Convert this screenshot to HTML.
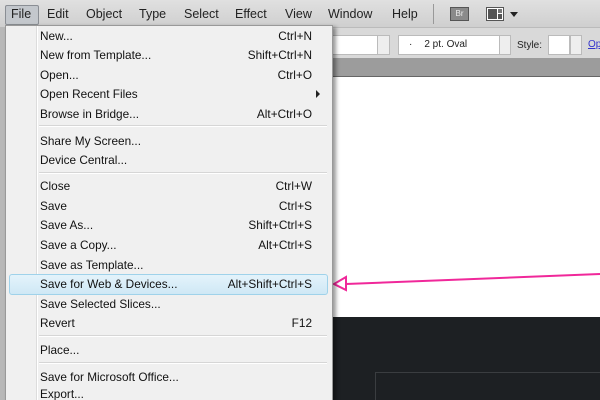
<!DOCTYPE html>
<html style="overflow:hidden"><head><style>
body{margin:0;width:600px;height:400px;overflow:hidden;position:relative;background:#d8d8d8;font-family:"Liberation Sans",sans-serif;}
.a{position:absolute}
.mb{left:0;top:0;width:600px;height:27px;background:linear-gradient(#e0e0e0,#cfcfcf);}
.mi{position:absolute;top:7px;font-size:12.5px;color:#222}
.tb{left:0;top:27px;width:600px;height:31px;background:#d9d9d9;border-top:1px solid #bbb}
.dk{left:0;top:58px;width:600px;height:18px;background:#9c9c9c;border-bottom:1px solid #666}
.doc{left:330px;top:77px;width:270px;height:240px;background:#fff}
.bot{left:330px;top:317px;width:270px;height:83px;background:#1d2023;overflow:hidden}
.menu{left:5px;top:25px;width:326px;height:374px;background:#f0f0f0;border:1px solid #999;border-bottom:none;box-shadow:3px 2px 4px rgba(0,0,0,.4);overflow:hidden}
.col{left:30px;top:0;width:1px;height:375px;background:#dcdcdc;border-right:1px solid #fff}
.r{position:absolute;left:34px;font-size:11.8px;color:#111;height:16px;line-height:16px}
.k{position:absolute;right:20px;font-size:11.8px;color:#111;line-height:16px}
.sep{position:absolute;left:33px;width:288px;height:1px;background:#d6d6d6;border-bottom:1px solid #fff}
</style></head><body>
<div class="a mb">
<div class="a" style="left:5px;top:5px;width:32px;height:18px;background:#c3c7cc;border:1px solid #8a8e94;border-radius:2px"></div>
<span class="mi" style="left:11px">File</span>
<span class="mi" style="left:47px">Edit</span>
<span class="mi" style="left:86px">Object</span>
<span class="mi" style="left:139px">Type</span>
<span class="mi" style="left:184px">Select</span>
<span class="mi" style="left:235px">Effect</span>
<span class="mi" style="left:285px">View</span>
<span class="mi" style="left:328px">Window</span>
<span class="mi" style="left:392px">Help</span>
<div class="a" style="left:433px;top:4px;width:1px;height:20px;background:#999"></div>
<div class="a" style="left:450px;top:7px;width:17px;height:12px;background:#8a8a8a;border:1px solid #555;color:#eee;font-size:8px;text-align:center;line-height:12px">Br</div>
<div class="a" style="left:486px;top:7px;width:16px;height:12px;background:#fff;border:1px solid #555"><div class="a" style="left:1px;top:1px;width:9px;height:10px;background:#555"></div><div class="a" style="left:11px;top:1px;width:4px;height:4px;background:#777"></div><div class="a" style="left:11px;top:6px;width:4px;height:5px;background:#555"></div></div>
<div class="a" style="left:510px;top:12px;border:4px solid transparent;border-top:5px solid #222"></div>
</div>
<div class="a tb">
<div class="a" style="left:330px;top:7px;width:46px;height:18px;background:#fff;border:1px solid #bbb"></div>
<div class="a" style="left:377px;top:7px;width:11px;height:18px;background:#eee;border:1px solid #bbb"></div>
<div class="a" style="left:398px;top:7px;width:100px;height:18px;background:#fff;border:1px solid #bbb;font-size:10px;line-height:18px;color:#222"><span style="margin-left:10px">·</span><span style="margin-left:12px">2 pt. Oval</span></div>
<div class="a" style="left:499px;top:7px;width:10px;height:18px;background:#eee;border:1px solid #bbb"></div>
<span class="a" style="left:517px;top:12px;font-size:10px;color:#222">Style:</span>
<div class="a" style="left:548px;top:7px;width:20px;height:18px;background:#fff;border:1px solid #bbb"></div>
<div class="a" style="left:570px;top:7px;width:10px;height:18px;background:#eee;border:1px solid #bbb"></div>
<span class="a" style="left:588px;top:11px;font-size:10px;color:#33c;text-decoration:underline">Op</span>
</div>
<div class="a dk"></div>
<div class="a doc"></div>
<div class="a bot"><div class="a" style="left:45px;top:55px;width:230px;height:40px;border:1px solid #3a3d40"></div></div>
<div class="a" style="left:0;top:27px;width:5px;height:373px;background:#b8b8b8"></div>
<svg class="a" style="left:330px;top:266px" width="270" height="26"><line x1="16" y1="18" x2="270" y2="8" stroke="#f0289a" stroke-width="2"/><path d="M16 11 L4 18 L16 24 Z" fill="none" stroke="#f0289a" stroke-width="2"/></svg>
<div class="a menu">
<div class="a col"></div>
<div class="a" style="left:3px;top:248px;width:317px;height:19px;background:linear-gradient(#e4f3fb,#cfe8f5);border:1px solid #9fd2ea;border-radius:3px"></div>
<div class="r" style="top:2px">New...</div><div class="k" style="top:2px">Ctrl+N</div>
<div class="r" style="top:21px">New from Template...</div><div class="k" style="top:21px">Shift+Ctrl+N</div>
<div class="r" style="top:41px">Open...</div><div class="k" style="top:41px">Ctrl+O</div>
<div class="r" style="top:60px">Open Recent Files</div><div class="a" style="left:310px;top:64px;border:4px solid transparent;border-left:4px solid #222"></div>
<div class="r" style="top:80px">Browse in Bridge...</div><div class="k" style="top:80px">Alt+Ctrl+O</div>
<div class="sep" style="top:99px"></div>
<div class="r" style="top:107px">Share My Screen...</div>
<div class="r" style="top:126px">Device Central...</div>
<div class="sep" style="top:146px"></div>
<div class="r" style="top:152px">Close</div><div class="k" style="top:152px">Ctrl+W</div>
<div class="r" style="top:172px">Save</div><div class="k" style="top:172px">Ctrl+S</div>
<div class="r" style="top:191px">Save As...</div><div class="k" style="top:191px">Shift+Ctrl+S</div>
<div class="r" style="top:211px">Save a Copy...</div><div class="k" style="top:211px">Alt+Ctrl+S</div>
<div class="r" style="top:231px">Save as Template...</div>
<div class="r" style="top:250px">Save for Web &amp; Devices...</div><div class="k" style="top:250px">Alt+Shift+Ctrl+S</div>
<div class="r" style="top:270px">Save Selected Slices...</div>
<div class="r" style="top:289px">Revert</div><div class="k" style="top:289px">F12</div>
<div class="sep" style="top:309px"></div>
<div class="r" style="top:316px">Place...</div>
<div class="sep" style="top:336px"></div>
<div class="r" style="top:343px">Save for Microsoft Office...</div>
<div class="r" style="top:360px">Export...</div>
</div>
</body></html>
